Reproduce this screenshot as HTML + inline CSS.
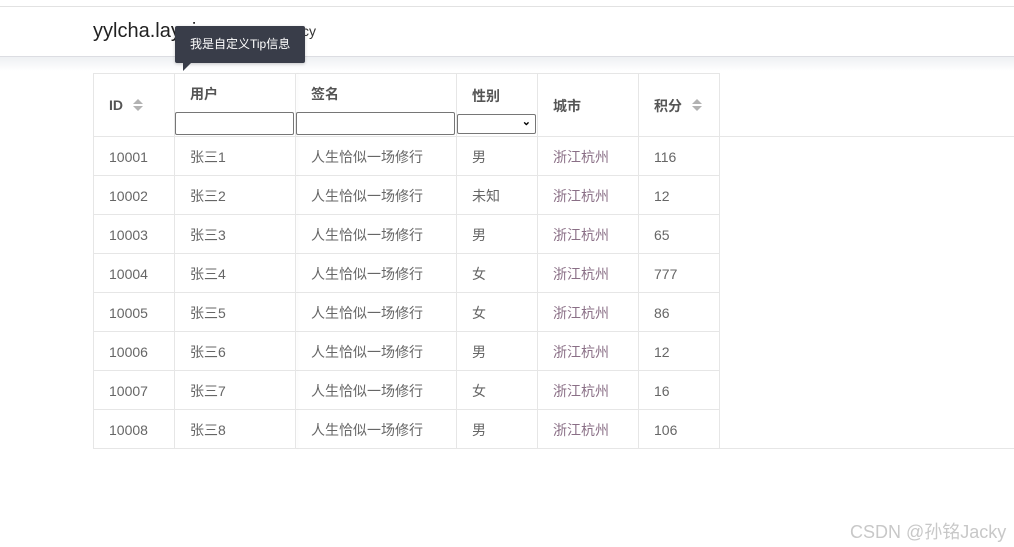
<!DOCTYPE html>
<html><head><meta charset="utf-8"><style>
*{margin:0;padding:0;box-sizing:border-box}
body{width:1014px;height:547px;background:#fff;position:relative;overflow:hidden;font-family:"Liberation Sans","Noto Sans CJK SC",sans-serif;color:#666}
.top{position:absolute;left:0;top:6px;width:1014px;height:51px;border-top:1px solid #e2e2e2;border-bottom:1px solid #dcdde2;background:#fff}
.shadow{position:absolute;left:0;top:57px;width:1014px;height:14px;background:linear-gradient(#eef0f3,#fff)}
.title{position:absolute;left:93px;top:20px;font-size:20px;color:#222}
.sub{position:absolute;left:302px;top:23px;font-size:14px;color:#333}
.tip{position:absolute;left:175px;top:26px;width:130px;height:37px;background:#393d49;border-radius:2px;color:#fff;font-size:12px;line-height:37px;padding-left:15px;box-shadow:0 1px 3px rgba(0,0,0,.2)}
.tip:after{content:"";position:absolute;left:8px;top:37px;border-left:8px solid #393d49;border-bottom:8px solid transparent}
.c{position:absolute;font-size:14px;line-height:20px}
.n{margin-top:1px}
.vl{position:absolute;top:73px;height:376px;width:1px;background:#e6e6e6}
.hl{position:absolute;left:93px;width:921px;height:1px;background:#e6e6e6}
.h{font-weight:bold;color:#555}
.sort{position:absolute;width:0;height:0;border-left:5px solid transparent;border-right:5px solid transparent}
.inp{position:absolute;height:23px;border:1px solid #767676;border-radius:2px;background:#fff}
.city{color:#8a6f86}
.wm{position:absolute;left:850px;top:518px;font-size:18px;color:#c8c8c8}
</style></head><body>
<div class="top"></div><div class="shadow"></div>
<div class="title">yylcha.layui</div><div class="sub">cy</div>
<div class="hl" style="top:73px;width:626px"></div>
<div class="hl" style="top:136px"></div>
<div class="hl" style="top:175px;width:626px"></div>
<div class="hl" style="top:214px;width:626px"></div>
<div class="hl" style="top:253px;width:626px"></div>
<div class="hl" style="top:292px;width:626px"></div>
<div class="hl" style="top:331px;width:626px"></div>
<div class="hl" style="top:370px;width:626px"></div>
<div class="hl" style="top:409px;width:626px"></div>
<div class="hl" style="top:448px"></div>
<div class="vl" style="left:93px"></div><div class="vl" style="left:174px"></div><div class="vl" style="left:295px;box-shadow:2px 0 3px rgba(0,0,0,.05)"></div><div class="vl" style="left:456px"></div><div class="vl" style="left:537px"></div><div class="vl" style="left:638px"></div><div class="vl" style="left:719px"></div>
<div class="c h" style="left:109px;top:95px">ID</div>
<div class="sort" style="left:133px;top:99px;border-bottom:5px solid #b2b2b2"></div><div class="sort" style="left:133px;top:106px;border-top:5px solid #b2b2b2"></div>
<div class="c h" style="left:190px;top:84px">用户</div>
<div class="c h" style="left:311px;top:84px">签名</div>
<div class="c h" style="left:472px;top:86px">性别</div>
<div class="c h" style="left:553px;top:96px">城市</div>
<div class="c h" style="left:654px;top:96px">积分</div>
<div class="sort" style="left:692px;top:99px;border-bottom:5px solid #b2b2b2"></div><div class="sort" style="left:692px;top:106px;border-top:5px solid #b2b2b2"></div>
<div class="inp" style="left:175px;top:112px;width:119px"></div>
<div class="inp" style="left:296px;top:112px;width:159px"></div>
<div class="inp" style="left:457px;top:114px;width:79px;height:20px"><span style="position:absolute;right:4px;top:0;font-size:11px;color:#000;font-weight:bold">&#8964;</span></div>
<div class="tip">我是自定义Tip信息</div>
<div id="rows"></div>
<script>
var s=["男","未知","男","女","女","男","女","男"],p=[116,12,65,777,86,12,16,106],h="";
for(var i=0;i<8;i++){var t=147+i*39;
h+='<div class="c" style="left:109px;top:'+t+'px">1000'+(i+1)+'</div><div class="c" style="left:190px;top:'+t+'px">张三'+(i+1)+'</div><div class="c" style="left:311px;top:'+t+'px">人生恰似一场修行</div><div class="c" style="left:472px;top:'+t+'px">'+s[i]+'</div><div class="c city" style="left:553px;top:'+t+'px">浙江杭州</div><div class="c" style="left:654px;top:'+t+'px">'+p[i]+'</div>';}
document.getElementById("rows").innerHTML=h;
</script>
<div class="wm">CSDN @孙铭Jacky</div>
</body></html>
